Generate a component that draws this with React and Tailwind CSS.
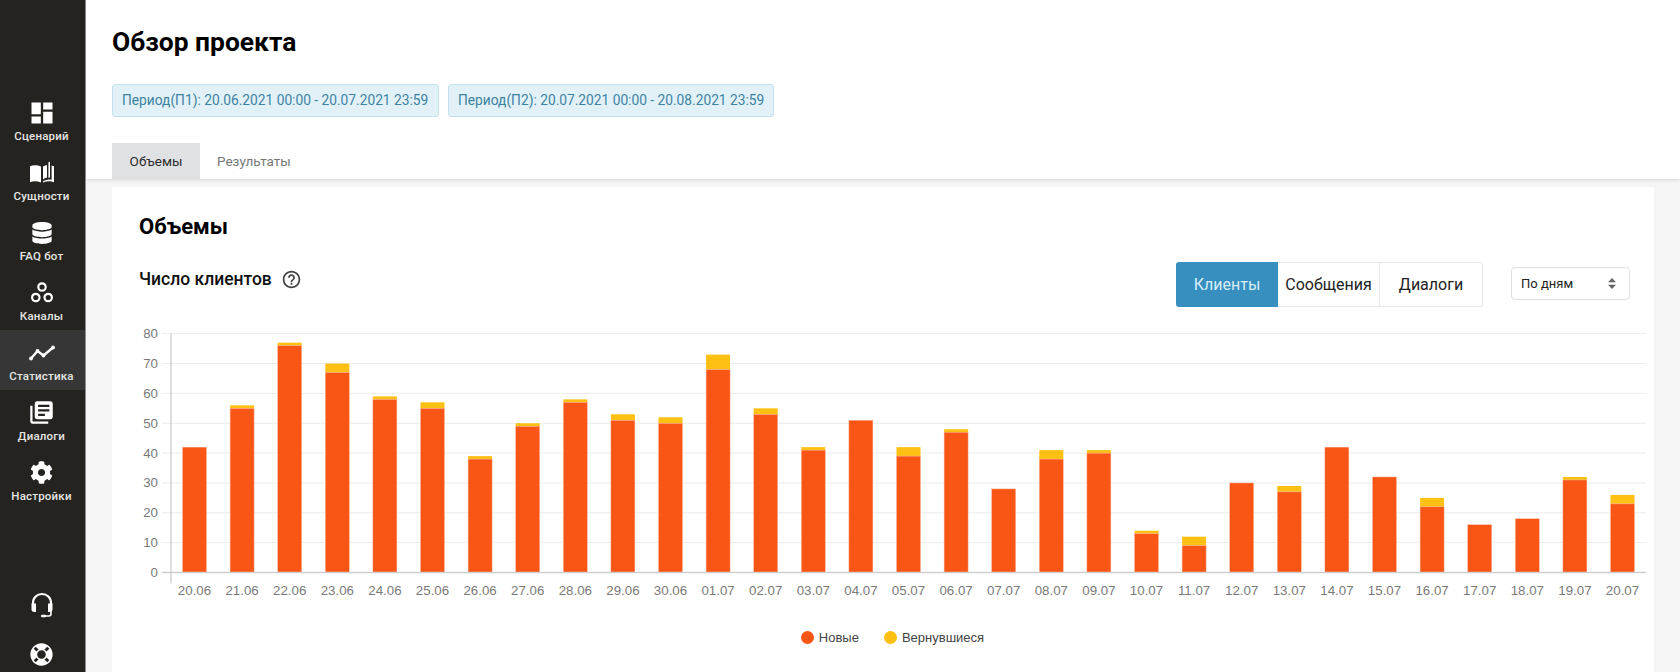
import React from "react";
import { MdDashboard, MdLibraryBooks, MdHelpOutline } from "react-icons/md";
import { FaDatabase, FaCog, FaLifeRing } from "react-icons/fa";

const data = [
  ["20.06", 42, 0], ["21.06", 55, 1], ["22.06", 76, 1], ["23.06", 67, 3], ["24.06", 58, 1], ["25.06", 55, 2],
  ["26.06", 38, 1], ["27.06", 49, 1], ["28.06", 57, 1], ["29.06", 51, 2], ["30.06", 50, 2], ["01.07", 68, 5],
  ["02.07", 53, 2], ["03.07", 41, 1], ["04.07", 51, 0], ["05.07", 39, 3], ["06.07", 47, 1], ["07.07", 28, 0],
  ["08.07", 38, 3], ["09.07", 40, 1], ["10.07", 13, 1], ["11.07", 9, 3], ["12.07", 30, 0], ["13.07", 27, 2],
  ["14.07", 42, 0], ["15.07", 32, 0], ["16.07", 22, 3], ["17.07", 16, 0], ["18.07", 18, 0], ["19.07", 31, 1],
  ["20.07", 23, 3],
];

function BookIcon() {
  return (
    <svg width="26" height="24" viewBox="0 0 26 24" fill="white">
      <path d="M1 5.2C4 3.8 8.4 3.8 12 5.6V21.6C8.4 20 4 20 1 21.2Z" />
      <path d="M14 5.6C15 5 16.4 4.3 18 3.9V16.5C16.4 17 15 17.6 14 18.4Z" />
      <path d="M19.4 1.5L21 0.6V16.2L19.4 17Z" />
      <path d="M22.6 4.4L25 5.2V21.2C22 20 17.6 20 14 21.6V20.2C17 18.8 20 18.4 22.6 18.7Z" />
    </svg>
  );
}

function ChannelsIcon() {
  return (
    <svg width="24" height="24" viewBox="0 0 24 24" fill="none" stroke="white" strokeWidth="2.2">
      <circle cx="12" cy="6" r="3.7" />
      <circle cx="5.8" cy="16.5" r="3.7" />
      <circle cx="18.2" cy="16.5" r="3.7" />
    </svg>
  );
}

function TrendIcon() {
  return (
    <svg width="26" height="16" viewBox="0 0 26 16" fill="none" stroke="white" strokeWidth="2.4" strokeLinecap="round" strokeLinejoin="round">
      <polyline points="2,13.5 8.5,6 14.5,10.5 24,2.5" />
      <g fill="white" stroke="none">
        <circle cx="2" cy="13.5" r="1.9" />
        <circle cx="8.5" cy="6" r="1.9" />
        <circle cx="14.5" cy="10.5" r="1.9" />
        <circle cx="24" cy="2.5" r="1.9" />
      </g>
    </svg>
  );
}

function HeadsetIcon() {
  return (
    <svg width="24" height="26" viewBox="0 0 24 26" fill="none">
      <path d="M3 14V11C3 5.5 7 2 12 2S21 5.5 21 11V14" stroke="white" strokeWidth="2.2" />
      <path d="M1.5 11.5H6V20H4C2.6 20 1.5 18.9 1.5 17.5Z" fill="white" />
      <path d="M18 11.5H22.5V17.5C22.5 18.9 21.4 20 20 20H18Z" fill="white" />
      <path d="M21 19V21.5C21 23 20.2 24 19 24H12" stroke="white" strokeWidth="1.6" />
      <rect x="11" y="22.8" width="5" height="2.4" rx="1" fill="white" />
    </svg>
  );
}

const nav = [
  ["Сценарий", <MdDashboard size={28} color="white" />],
  ["Сущности", <BookIcon />],
  ["FAQ бот", <FaDatabase size={22} color="white" />],
  ["Каналы", <ChannelsIcon />],
  ["Статистика", <TrendIcon />, true],
  ["Диалоги", <MdLibraryBooks size={27} color="white" />],
  ["Настройки", <FaCog size={23} color="white" />],
];

function NavItem({ label, icon, active }) {
  return (
    <div className={"flex h-[60px] flex-col items-center pr-[2px] " + (active ? "bg-[#363636]" : "")}>
      <div className="flex h-[39px] items-center justify-center pt-[6px]">{icon}</div>
      <span className="text-[11.5px] font-medium leading-[14px] tracking-[0.2px] text-[#e6e6e4]">{label}</span>
    </div>
  );
}

function Chart() {
  const x0 = 59;
  const y0 = 262.5;
  const unit = 2.985;
  const step = 47.6;
  const first = 82.5;
  const ticks = [0, 10, 20, 30, 40, 50, 60, 70, 80];
  return (
    <svg width="1544" height="290" viewBox="0 0 1544 290" className="block">
      {ticks.map((t) => (
        <g key={t}>
          {t > 0 && <line x1={x0 - 9} x2="1534" y1={y0 - t * unit} y2={y0 - t * unit} stroke="#ececec" strokeWidth="1" />}
          <text x={x0 - 13} y={y0 - t * unit + 4.5} textAnchor="end" fontSize="13.3" fill="#7a7a7a" fontFamily="Liberation Sans">{t}</text>
        </g>
      ))}
      {data.map(([d, n, r], i) => {
        const cx = first + i * step;
        return (
          <g key={d}>
            {r > 0 && <rect x={cx - 12} y={y0 - (n + r) * unit} width="24" height={r * unit} fill="#fdc013" />}
            <rect x={cx - 12} y={y0 - n * unit} width="24" height={n * unit} fill="#f95515" stroke="#fbb9a0" strokeWidth="0.5" />
            <text x={cx} y={y0 + 22} textAnchor="middle" fontSize="13.3" fill="#7a7a7a" fontFamily="Liberation Sans">{d}</text>
          </g>
        );
      })}
      <line x1={x0 - 9} x2="1534" y1={y0} y2={y0} stroke="#cfcfcf" strokeWidth="1.5" />
      <line x1={x0} x2={x0} y1={y0 - 80 * unit} y2={y0 + 11} stroke="#bdbdbd" strokeWidth="1" />
    </svg>
  );
}

export default function App() {
  return (
    <div className="flex h-[672px] w-[1680px] overflow-hidden bg-[#f5f5f5] font-['Roboto',sans-serif]">
      <aside className="flex h-full w-[86px] shrink-0 flex-col border-r border-[#8e8e8e] bg-[#24231f] pt-[90px]">
        {nav.map(([label, icon, active]) => (
          <NavItem key={label} label={label} icon={icon} active={active} />
        ))}
        <div className="mt-auto flex flex-col items-center gap-[25px] pb-[6px] pr-[2px]">
          <HeadsetIcon />
          <FaLifeRing size={23} color="white" />
        </div>
      </aside>
      <main className="flex min-w-0 flex-1 flex-col">
        <header className="relative z-10 h-[179px] shrink-0 bg-white pl-[26px] pt-[25px] shadow-[0_1px_4px_rgba(0,0,0,0.12)]">
          <h1 className="text-[26.4px] font-bold leading-[34px] text-black">Обзор проекта</h1>
          <div className="mt-[25px] flex gap-[9px]">
            <div className="flex h-[33px] w-[327px] items-center rounded-[3px] border border-[#c5e3ef] bg-[#e2f1f7] pl-[9px] text-[13.75px] text-[#3c83a3]">Период(П1): 20.06.2021 00:00 - 20.07.2021 23:59</div>
            <div className="flex h-[33px] w-[326px] items-center rounded-[3px] border border-[#c5e3ef] bg-[#e2f1f7] pl-[9px] text-[13.75px] text-[#3c83a3]">Период(П2): 20.07.2021 00:00 - 20.08.2021 23:59</div>
          </div>
          <div className="mt-[26px] flex text-[13.5px]">
            <div className="flex h-[36px] w-[88px] items-center justify-center bg-[#e0e1e3] text-[#2b2b2b]">Объемы</div>
            <div className="flex h-[36px] items-center pl-[17px] text-[#777777]">Результаты</div>
          </div>
        </header>
        <div className="mx-[26px] mt-[8px] flex-1 bg-white">
          <h2 className="pl-[27px] pt-[26px] text-[22px] font-bold leading-[28px] text-black">Объемы</h2>
          <div className="mt-[21px] flex h-[48px] items-start pl-[27px] pr-[24px]">
            <div className="mt-[6px] flex items-center gap-[9px]">
              <span className="text-[17.5px] font-medium leading-[22px] text-[#111111]">Число клиентов</span>
              <MdHelpOutline size={21} color="#444444" />
            </div>
            <div className="ml-auto flex h-[45px] text-[16px]">
              <div className="flex w-[102px] items-center justify-center rounded-l-[3px] bg-[#368fbf] text-[#d9edf7]">Клиенты</div>
              <div className="flex w-[102px] items-center justify-center border-y border-r border-[#e6e8ea] text-[#222222]">Сообщения</div>
              <div className="flex w-[103px] items-center justify-center rounded-r-[3px] border-y border-r border-[#e6e8ea] text-[#222222]">Диалоги</div>
            </div>
            <div className="ml-[28px] mt-[5px] flex h-[33px] w-[119px] items-center justify-between rounded-[4px] border border-[#dde1e6] pl-[9px] pr-[13px] text-[13px] text-[#222222]">
              По дням
              <svg width="8" height="11" viewBox="0 0 8 11" fill="#666666">
                <path d="M4 0L8 4.3H0Z" />
                <path d="M4 11L0 6.7H8Z" />
              </svg>
            </div>
          </div>
          <Chart />
          <div className="flex items-center justify-center gap-[25px] pl-[19px] pt-[28px] font-['Liberation_Sans',sans-serif] text-[13px] text-[#444444]">
            <span className="flex items-center gap-[5px]"><i className="h-[13px] w-[13px] rounded-full bg-[#f95515]" />Новые</span>
            <span className="flex items-center gap-[5px]"><i className="h-[13px] w-[13px] rounded-full bg-[#fdc013]" />Вернувшиеся</span>
          </div>
        </div>
      </main>
    </div>
  );
}
